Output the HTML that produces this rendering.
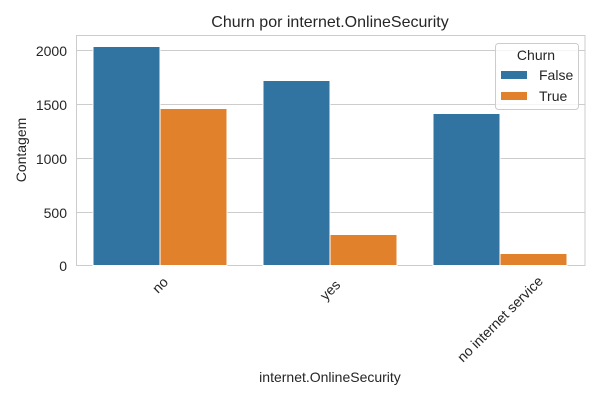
<!DOCTYPE html>
<html><head><style>body{margin:0;background:#fff}svg{display:block}text{font-family:"Liberation Sans",Arial,sans-serif;fill:#262626}</style></head><body>
<svg width="600" height="400" xmlns="http://www.w3.org/2000/svg">
<rect width="600" height="400" fill="#fff"/>
<g stroke="#cccccc" stroke-width="1">
<line x1="76" y1="50.5" x2="585" y2="50.5"/>
<line x1="76" y1="104.5" x2="585" y2="104.5"/>
<line x1="76" y1="158.5" x2="585" y2="158.5"/>
<line x1="76" y1="212.5" x2="585" y2="212.5"/>
<rect x="76.5" y="35.5" width="508.5" height="230" fill="none"/>
</g>
<g stroke="#fff" stroke-width="1">
<rect x="93" y="46.5" width="67" height="219" fill="#3274a1"/>
<rect x="160" y="108.5" width="67" height="157" fill="#e1812c"/>
<rect x="263" y="80.5" width="67" height="185" fill="#3274a1"/>
<rect x="330" y="234.5" width="67" height="31" fill="#e1812c"/>
<rect x="433" y="113.5" width="67" height="152" fill="#3274a1"/>
<rect x="500" y="253.5" width="67" height="12" fill="#e1812c"/>
</g>
<g font-size="14" text-anchor="end">
<text x="67" y="56">2000</text>
<text x="67" y="110">1500</text>
<text x="67" y="164">1000</text>
<text x="67" y="218">500</text>
<text x="67" y="271">0</text>
</g>
<text transform="translate(26,150) rotate(-90)" font-size="14" text-anchor="middle">Contagem</text>
<text x="330" y="27" font-size="16" text-anchor="middle">Churn por internet.OnlineSecurity</text>
<text x="330" y="382" font-size="14" text-anchor="middle">internet.OnlineSecurity</text>
<g font-size="14" text-anchor="middle">
<text transform="translate(160,285) rotate(-45)" dy="0.35em">no</text>
<text transform="translate(330,290) rotate(-45)" dy="0.35em">yes</text>
<text transform="translate(500,319) rotate(-45)" dy="0.35em">no internet service</text>
</g>
<rect x="495.5" y="43.5" width="83" height="66" rx="3" fill="#fff" fill-opacity="0.8" stroke="#cccccc"/>
<text x="536" y="60" font-size="14" text-anchor="middle">Churn</text>
<rect x="501" y="71" width="26" height="8" fill="#3274a1"/>
<text x="539" y="80" font-size="14">False</text>
<rect x="501" y="92" width="26" height="8" fill="#e1812c"/>
<text x="539" y="101" font-size="14">True</text>
</svg>
</body></html>
